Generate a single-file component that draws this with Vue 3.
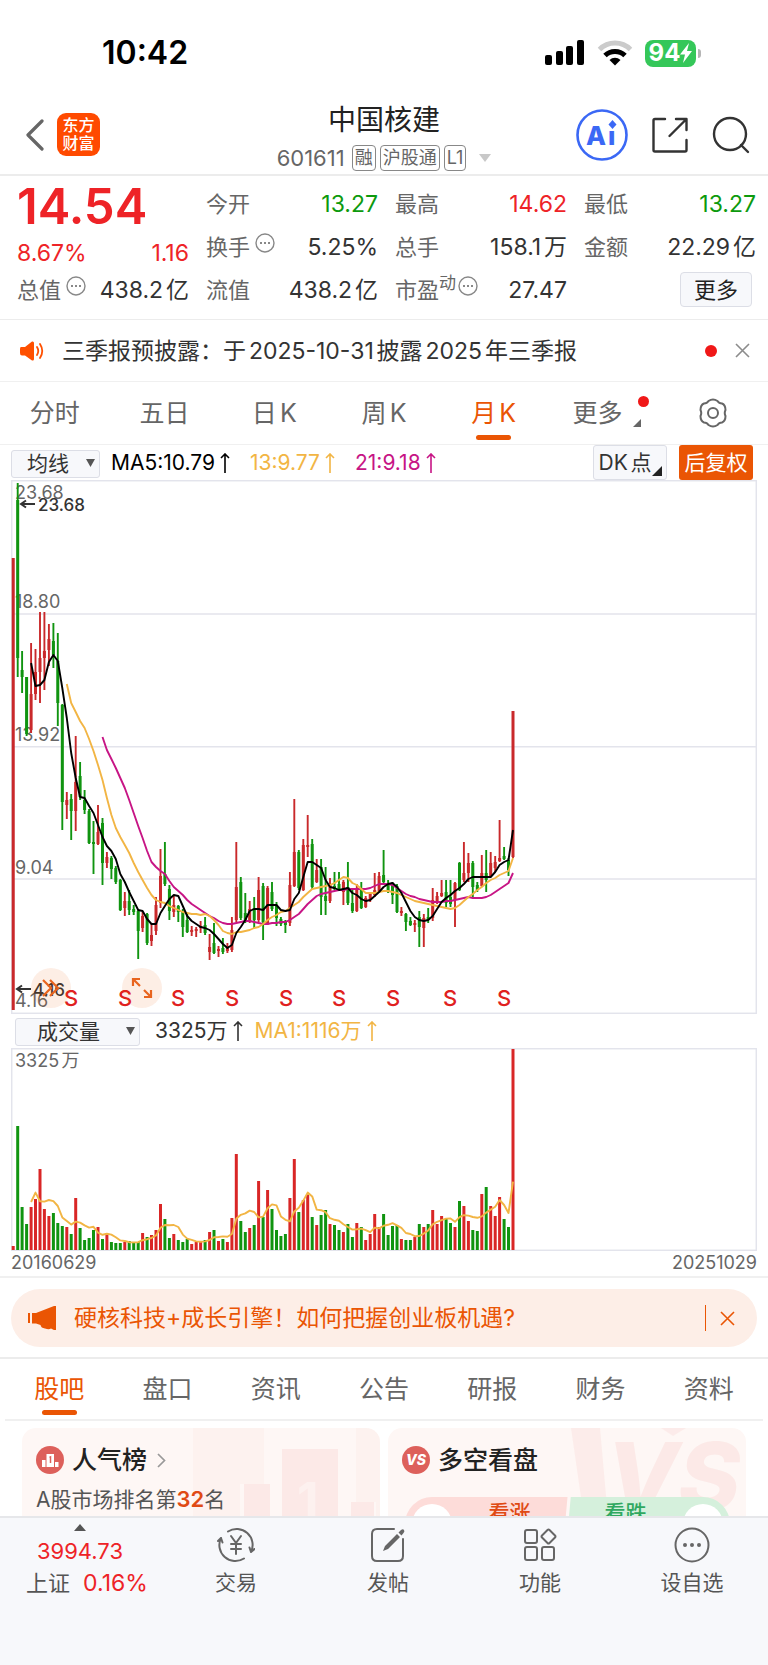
<template>
  <div class="page">
    <div class="status-bar">
      <span class="time">10:42</span>
      <div class="status-icons">
        <svg width="40" height="26" viewBox="0 0 40 26">
          <rect x="0" y="15" width="7" height="10" rx="2" />
          <rect x="11" y="11" width="7" height="14" rx="2" />
          <rect x="21" y="6" width="7" height="19" rx="2" />
          <rect x="32" y="0" width="7" height="25" rx="2" />
        </svg>
        <svg width="36" height="26" viewBox="0 0 36 26" fill="none" stroke-width="5">
          <path d="M2.5 9.5 A22 22 0 0 1 33.5 9.5" stroke="#cbcbcb" />
          <path d="M8 15.5 A14.5 14.5 0 0 1 28 15.5" stroke="#000" />
          <path d="M12.5 20 A8 8 0 0 1 23.500 20 L18 25.500 Z" fill="#000" />
        </svg>
        <div class="battery">
          <span class="battery-body">94<svg width="12" height="20" viewBox="0 0 12 20" fill="#fff"><path d="M9 0 L0 11.500 H5 L3 20 L12 8 H7 Z" /></svg></span>
          <span class="battery-cap"></span>
        </div>
      </div>
    </div>

    <header class="header">
      <div class="header-left">
        <button class="plain" aria-label="返回">
          <svg width="20" height="32" viewBox="0 0 20 32" fill="none" stroke="#666" stroke-width="3.200" stroke-linecap="round" stroke-linejoin="round"><path d="M17 2 L3 16 L17 30" /></svg>
        </button>
        <a href="#" class="logo">东方<br>财富</a>
      </div>
      <div class="header-title">
        <h1>中国核建</h1>
        <div class="code">
          <span class="code-num">601611</span>
          <i v-for="t in ['融', '沪股通', 'L1']" :key="t" class="tag">{{ t }}</i>
          <svg class="code-arrow" width="12" height="8" viewBox="0 0 12 8" fill="#c8c8c8"><path d="M0 0 H12 L6 8 Z" /></svg>
        </div>
      </div>
      <div class="header-right">
        <button class="plain" aria-label="AI">
          <svg width="52" height="52" viewBox="0 0 52 52">
            <circle cx="26" cy="26" r="24.500" fill="#fff" stroke="#3b68f5" stroke-width="2.600" />
            <text x="10 32" y="36" class="ai-text">Ai</text>
            <rect x="31" y="12" width="12" height="9" fill="#fff" />
            <path d="M36.500 11 L40.500 15.500 L36.500 20 L32.500 15.500 Z" fill="#3b68f5" />
          </svg>
        </button>
        <button class="plain" aria-label="分享">
          <svg width="36" height="36" viewBox="0 0 36 36" fill="none" stroke="#333" stroke-width="2.400" stroke-linecap="round" stroke-linejoin="round">
            <path d="M13 2 H3 Q1.500 2 1.500 3.500 V33 Q1.500 34.500 3 34.500 H33 Q34.500 34.500 34.500 33 V23" />
            <path d="M24 2 H34.500 V13 M34 2.500 L17.500 19" />
          </svg>
        </button>
        <button class="plain" aria-label="搜索">
          <svg width="38" height="38" viewBox="0 0 38 38" fill="none" stroke="#333" stroke-width="2.400" stroke-linecap="round"><circle cx="18" cy="18" r="16" /><path d="M29 29 L36 36" /></svg>
        </button>
      </div>
    </header>

    <section class="quote">
      <div class="quote-col first">
        <div class="price">14.54</div>
        <div class="quote-row red"><span class="value">8.67%</span><span class="value">1.16</span></div>
        <div class="quote-row">
          <span class="label">总值<MoreDot /></span><span class="value">438.2亿</span>
        </div>
      </div>
      <div v-for="(col, c) in quoteCols" :key="c" class="quote-col">
        <div v-for="q in col" :key="q.label" class="quote-row">
          <span class="label">{{ q.label }}<sup v-if="q.sup">{{ q.sup }}</sup><MoreDot v-if="q.dot" /></span>
          <span class="value" :class="q.color">{{ q.value }}</span>
        </div>
        <div v-if="c === 2" class="quote-row more-row"><button class="more-btn">更多</button></div>
      </div>
    </section>

    <section class="notice">
      <svg width="24" height="20" viewBox="0 0 24 20" fill="#ff5000">
        <path d="M1 6 H5 L12 0.500 Q14 0 14 2 V18 Q14 20 12 19.500 L5 14.500 H2 Q0 14.500 0 12 V8 Q0 6 1 6 Z" />
        <path d="M17 6 Q19.500 10 17 14 M20 3 Q24.500 10 20 17" fill="none" stroke="#ff5000" stroke-width="1.800" stroke-linecap="round" />
      </svg>
      <a href="#">三季报预披露：于2025-10-31披露2025年三季报</a>
      <span class="dot"></span>
      <button class="plain" aria-label="关闭">
        <svg width="15" height="15" viewBox="0 0 15 15" stroke="#8c8c8c" stroke-width="1.600"><path d="M1 1 L14 14 M14 1 L1 14" /></svg>
      </button>
    </section>

    <nav class="period">
      <button v-for="p in periods" :key="p" class="tab" :class="{ active: p === period }" @click="period = p">{{ p }}</button>
      <button class="tab more-tab">更多<span class="dot"></span><svg class="corner" width="8" height="8" viewBox="0 0 8 8" fill="#666"><path d="M8 0 V8 H0 Z" /></svg></button>
      <button class="tab" aria-label="设置">
        <svg width="30" height="30" viewBox="0 0 30 30" fill="none" stroke="#666" stroke-width="2" stroke-linejoin="round">
          <path d="M10.500 3 Q15 0 19.500 3 Q21 5.500 24 5.500 Q27.500 7 27.500 12 Q26 15 27.500 18 Q27.500 23 24 24.500 Q21 24.500 19.500 27 Q15 30 10.500 27 Q9 24.500 6 24.500 Q2.500 23 2.500 18 Q4 15 2.500 12 Q2.500 7 6 5.500 Q9 5.500 10.500 3 Z" />
          <circle cx="15" cy="15" r="5" />
        </svg>
      </button>
    </nav>

    <div class="toolbar">
      <div class="select-box ma">
        <select aria-label="主图指标"><option>均线</option></select>
        <svg width="9" height="8" viewBox="0 0 9 8" fill="#555"><path d="M0 0 H9 L4.500 8 Z" /></svg>
      </div>
      <span class="ind black">MA5:10.79<UpArrow /></span>
      <span class="ind orange">13:9.77<UpArrow /></span>
      <span class="ind purple">21:9.18<UpArrow /></span>
      <button class="dk">DK点<svg class="corner" width="10" height="10" viewBox="0 0 10 10" fill="#222"><path d="M10 0 V10 H0 Z" /></svg></button>
      <button class="fq">后复权</button>
    </div>

    <div class="chart">
      <svg viewBox="11 480 746 534">
        <g fill="none" stroke="#e3e4ec" stroke-width="1.500">
          <rect x="11.700" y="480.700" width="744.600" height="532.600" />
          <path d="M12 614 H756 M12 746.700 H756 M12 879 H756" />
        </g>
        <g class="axis">
          <text x="15" y="499">23.68</text>
          <text x="15" y="608">18.80</text>
          <text x="15" y="741">13.92</text>
          <text x="15" y="874">9.04</text>
          <text x="15" y="1007">4.16</text>
        </g>
        <g v-for="(d, i) in bars" :key="i" :stroke="d[0] ? '#c9292b' : '#109410'">
          <line :x1="xAt(i)" :x2="xAt(i)" :y1="d[1]" :y2="d[4]" stroke-width="1.900" />
          <line :x1="xAt(i)" :x2="xAt(i)" :y1="d[2]" :y2="d[3]" stroke-width="3" />
        </g>
        <g fill="none" stroke-width="1.900" stroke-linejoin="round">
          <polyline :points="line(ma21)" stroke="#c71585" />
          <polyline :points="line(ma13)" stroke="#f2b544" />
          <polyline :points="line(ma5)" stroke="#000" />
        </g>
        <g class="mark">
          <path d="M35 504 H21 M26 500.500 L21 504 L26 507.500" /><text x="38" y="511">23.68</text>
          <path d="M31 989 H17 M22 985.500 L17 989 L22 992.500" /><text x="33" y="996">4.16</text>
        </g>
        <g class="sell"><text v-for="x in sells" :key="x" :x="x" y="1006">S</text></g>
      </svg>
      <button class="round expand" aria-label="展开">
        <svg width="18" height="20" viewBox="0 0 18 20"><path d="M1 2 L9 10 L1 18 M8 2 L16 10 L8 18" /></svg>
      </button>
      <button class="round full" aria-label="全屏">
        <svg width="22" height="22" viewBox="0 0 22 22"><path d="M2 9 V2 H9 M2 2 L9 9 M13 20 H20 V13 M20 20 L13 13" /></svg>
      </button>
    </div>

    <div class="toolbar vol-bar">
      <div class="select-box vol">
        <select aria-label="副图指标"><option>成交量</option></select>
        <svg width="9" height="8" viewBox="0 0 9 8" fill="#555"><path d="M0 0 H9 L4.500 8 Z" /></svg>
      </div>
      <span class="ind">3325万<UpArrow /></span>
      <span class="ind orange">MA1:1116万<UpArrow /></span>
    </div>

    <div class="chart">
      <svg viewBox="11 1048 746 203">
        <rect x="11.700" y="1048.700" width="744.600" height="201.600" fill="none" stroke="#e3e4ec" stroke-width="1.500" />
        <text x="15" y="1067" class="axis">3325万</text>
        <line v-for="(d, i) in bars" :key="i" :x1="xAt(i)" :x2="xAt(i)" :y1="1250 - d[5]" y2="1250" :stroke="d[0] ? '#d92626' : '#109410'" stroke-width="3" />
        <polyline :points="line(volMa)" fill="none" stroke="#f2b544" stroke-width="1.900" stroke-linejoin="round" />
      </svg>
    </div>
    <div class="dates"><span>20160629</span><span>20251029</span></div>

    <section class="promo-wrap">
      <div class="promo">
        <svg width="28" height="24" viewBox="0 0 28 24" fill="#ea5504">
          <path d="M0 7 H2 V17 H0 Z M4 7 H8 L26 0 H28 V24 H26 L23 22.500 Q21 24 17 22.500 Q13 22 12.500 19 L8 17.500 H4 Z" />
        </svg>
        <a href="#">硬核科技+成长引擎！如何把握创业板机遇?</a>
        <span class="sep"></span>
        <button class="plain" aria-label="关闭">
          <svg width="15" height="15" viewBox="0 0 15 15" stroke="#ea5504" stroke-width="1.600"><path d="M1 1 L14 14 M14 1 L1 14" /></svg>
        </button>
      </div>
    </section>

    <nav class="sections">
      <button v-for="s in sections" :key="s" class="tab" :class="{ active: s === section }" @click="section = s">{{ s }}</button>
    </nav>

    <section class="cards">
      <article class="card">
        <svg class="watermark" width="190" height="90" viewBox="0 0 190 90" fill="#f9d5d1">
          <path d="M3 0 H74 V56 H50 V90 H3 Z" opacity=".15" />
          <path d="M166 0 H190 V90 H186 V74 H166 Z" opacity=".15" />
          <path d="M92 21 H148 V90 H92 Z M54 56 H80 V90 H54 Z M161 74 H184 V90 H161 Z" opacity=".4" />
          <text x="107" y="90" class="wm-one">1</text>
        </svg>
        <h2>
          <svg width="28" height="28" viewBox="0 0 28 28"><circle cx="14" cy="14" r="14" fill="#dd605b" /><path d="M6 14 H9.500 V21 H6 Z M10.500 8 H18 V21 H10.500 Z M19 16 H22.500 V21 H19 Z" fill="#fff" /><path d="M13.500 11.500 L14.500 11 V17" stroke="#dd605b" stroke-width="1.500" fill="none" /></svg>
          人气榜
          <svg class="chev" width="9" height="15" viewBox="0 0 9 15" fill="none" stroke="#999" stroke-width="1.700"><path d="M1 1 L7.500 7.500 L1 14" /></svg>
        </h2>
        <p>A股市场排名第<b>32</b>名</p>
      </article>
      <article class="card">
        <svg class="watermark" width="190" height="90" viewBox="0 0 190 90" fill="#f9d5d1">
          <path d="M15 0 H44 L52 90 H28 Z M105 0 H130 L117 8 Z" opacity=".3" />
          <text x="50" y="82" class="wm-vs">VS</text>
        </svg>
        <h2>
          <svg width="28" height="28" viewBox="0 0 28 28"><circle cx="14" cy="14" r="14" fill="#dd605b" /><text x="14" y="19" class="vs-text">VS</text></svg>
          多空看盘
        </h2>
        <div class="vote">
          <button class="bull"><span class="knob"></span>看涨</button>
          <button class="bear">看跌<span class="knob"></span></button>
        </div>
      </article>
    </section>

    <footer class="bottom">
      <a href="#" class="index">
        <svg width="12" height="7" viewBox="0 0 12 7" fill="#555"><path d="M6 0 L12 7 H0 Z" /></svg>
        <span class="red">3994.73</span>
        <span class="index-row">上证<em class="red">0.16%</em></span>
      </a>
      <a v-for="n in navs" :key="n.text" href="#" class="nav">
        <svg width="38" height="36" viewBox="0 0 38 36" fill="none" stroke="#666" stroke-width="2" stroke-linecap="round" stroke-linejoin="round"><path v-for="p in n.paths" :key="p" :d="p" /><path v-if="n.solid" :d="n.solid" fill="#666" stroke="none" /></svg>
        <span>{{ n.text }}</span>
      </a>
    </footer>
  </div>
</template>

<script setup>
import { ref, h } from 'vue'

// 圆圈省略号小图标
const MoreDot = () => h('svg', { width: 20, height: 20, viewBox: '0 0 20 20', class: 'more-dot', fill: 'none', stroke: '#888' }, [
  h('circle', { cx: 10, cy: 10, r: 9, 'stroke-width': 1.4 }),
  h('path', { d: 'M5 10 H7 M9 10 H11 M13 10 H15', 'stroke-width': 2 })
])

const UpArrow = () => h('svg', { width: 10, height: 20, viewBox: '0 0 10 20', class: 'up-arrow', fill: 'none', stroke: 'currentColor', 'stroke-width': 1.6 }, [
  h('path', { d: 'M5 20 V1 M1 5 L5 1 L9 5' })
])

const quoteCols = [
  [
    { label: '今开', value: '13.27', color: 'green' },
    { label: '换手', value: '5.25%', dot: true },
    { label: '流值', value: '438.2亿' }
  ],
  [
    { label: '最高', value: '14.62', color: 'red' },
    { label: '总手', value: '158.1万' },
    { label: '市盈', value: '27.47', sup: '动', dot: true }
  ],
  [
    { label: '最低', value: '13.27', color: 'green' },
    { label: '金额', value: '22.29亿' }
  ]
]

const periods = ['分时', '五日', '日K', '周K', '月K']
const period = ref('月K')
const sections = ['股吧', '盘口', '资讯', '公告', '研报', '财务', '资料']
const section = ref('股吧')

const navs = [
  {
    text: '交易',
    paths: ['M11 4.500 A16 16 0 0 1 34 25 M34 25 L32.500 20.500 M34 25 L37.500 22', 'M27 31.500 A16 16 0 0 1 4 11 M4 11 L1 14 M4 11 L5.500 15.500', 'M14 9 L19 16 L24 9 M19 16 V27 M14 17 H24 M14 22 H24']
  },
  {
    text: '发帖',
    paths: ['M25 2 H8 Q3 2 3 7 V29 Q3 34 8 34 H29 Q34 34 34 29 V12'],
    solid: 'M14 24 L16 19 L28 7 L31 10 L19 22 Z M29.500 5.500 L32 3 Q34 1.500 35 3 Q36 4.500 34.500 6 L32.500 8.500 Z'
  },
  {
    text: '功能',
    paths: [
      'M6 3 H14 Q16 3 16 5 V14 Q16 16 14 16 H6 Q4 16 4 14 V5 Q4 3 6 3 Z',
      'M6 20 H14 Q16 20 16 22 V31 Q16 33 14 33 H6 Q4 33 4 31 V22 Q4 20 6 20 Z',
      'M23 20 H31 Q33 20 33 22 V31 Q33 33 31 33 H23 Q21 33 21 31 V22 Q21 20 23 20 Z',
      'M26.500 3 Q27.500 2 28.500 3 L34 8.500 Q35 9.500 34 10.500 L28.500 16 Q27.500 17 26.500 16 L21 10.500 Q20 9.500 21 8.500 Z'
    ]
  },
  {
    text: '设自选',
    paths: ['M2.500 18 A16.500 16.500 0 1 1 35.500 18 A16.500 16.500 0 1 1 2.500 18'],
    solid: 'M10 18 a2 2 0 1 1 4 0 a2 2 0 1 1 -4 0 M17 18 a2 2 0 1 1 4 0 a2 2 0 1 1 -4 0 M24 18 a2 2 0 1 1 4 0 a2 2 0 1 1 -4 0'
  }
]

// [涨, 最高, 实体上, 实体下, 最低, 量]
const bars = [
  [1, 558, 558, 1010, 1010, 4], [0, 483, 500, 658, 677, 124], [0, 651, 670, 677, 693, 43], [0, 677, 677, 734, 736, 26],
  [1, 643, 694, 730, 733, 43], [1, 649, 672, 694, 700, 51], [1, 612, 658, 672, 703, 81], [1, 612, 651, 658, 690, 41],
  [1, 624, 639, 650, 666, 34], [0, 623, 641, 655, 668, 37], [0, 633, 661, 703, 726, 27], [0, 704, 705, 802, 830, 24],
  [1, 792, 800, 805, 819, 23], [0, 794, 799, 811, 840, 16], [1, 736, 782, 811, 831, 52], [0, 762, 776, 797, 800, 22],
  [0, 790, 800, 810, 814, 10], [0, 809, 811, 843, 844, 12], [0, 821, 842, 844, 874, 20], [1, 805, 832, 844, 845, 23],
  [0, 818, 823, 863, 885, 11], [1, 852, 857, 863, 868, 15], [0, 856, 858, 869, 879, 8], [0, 866, 868, 882, 884, 7],
  [0, 879, 880, 910, 911, 7], [1, 892, 901, 908, 916, 8], [0, 890, 901, 910, 915, 9], [0, 905, 909, 912, 915, 7],
  [0, 909, 911, 931, 959, 8], [1, 912, 916, 928, 932, 17], [0, 913, 914, 943, 945, 13], [1, 924, 935, 941, 946, 15],
  [1, 897, 905, 931, 935, 20], [1, 849, 876, 903, 908, 46], [0, 842, 874, 884, 886, 31], [0, 885, 889, 911, 920, 12],
  [1, 896, 905, 912, 917, 16], [0, 905, 906, 912, 922, 10], [0, 909, 911, 927, 937, 8], [0, 913, 920, 932, 933, 11],
  [1, 926, 930, 932, 936, 6], [1, 927, 929, 931, 937, 8], [1, 921, 926, 928, 933, 8], [0, 917, 925, 933, 935, 10],
  [1, 934, 947, 952, 960, 18], [0, 923, 943, 953, 954, 20], [1, 946, 949, 951, 957, 9], [0, 938, 948, 952, 954, 11],
  [1, 943, 946, 951, 953, 8], [1, 917, 930, 950, 952, 32], [1, 842, 887, 920, 922, 96], [0, 877, 882, 918, 920, 29],
  [0, 893, 913, 922, 923, 18], [1, 901, 909, 922, 923, 22], [0, 897, 908, 920, 928, 25], [1, 877, 890, 920, 922, 69],
  [0, 883, 886, 922, 940, 33], [1, 886, 888, 923, 925, 60], [0, 882, 892, 909, 911, 41], [0, 902, 905, 918, 926, 20],
  [0, 917, 919, 924, 926, 14], [0, 920, 921, 925, 933, 16], [1, 872, 885, 923, 926, 52], [1, 799, 852, 886, 887, 91],
  [0, 850, 852, 888, 890, 38], [1, 839, 845, 890, 891, 50], [1, 815, 845, 847, 857, 56], [0, 839, 844, 887, 889, 33],
  [1, 859, 870, 882, 883, 25], [0, 859, 867, 897, 915, 35], [0, 867, 896, 901, 915, 40], [1, 878, 885, 901, 903, 26],
  [0, 872, 886, 889, 890, 25], [0, 872, 884, 890, 891, 20], [1, 880, 882, 892, 905, 18], [0, 862, 887, 903, 905, 26],
  [0, 890, 903, 911, 913, 13], [1, 884, 888, 911, 912, 27], [0, 882, 889, 908, 909, 23], [1, 896, 898, 907, 908, 10],
  [1, 892, 894, 900, 902, 16], [1, 873, 890, 895, 897, 36], [1, 872, 876, 891, 893, 23], [0, 850, 875, 882, 883, 36],
  [0, 880, 883, 891, 893, 15], [0, 882, 885, 895, 904, 24], [0, 884, 886, 912, 913, 25], [1, 907, 911, 913, 916, 11],
  [0, 913, 914, 922, 931, 10], [0, 917, 921, 925, 926, 10], [1, 920, 923, 925, 932, 13], [0, 911, 917, 927, 947, 26],
  [1, 914, 918, 928, 947, 23], [0, 908, 917, 920, 923, 26], [1, 888, 900, 918, 921, 40], [1, 892, 896, 903, 904, 26],
  [1, 880, 893, 896, 897, 34], [0, 880, 892, 903, 907, 31], [0, 880, 897, 904, 907, 27], [1, 882, 883, 900, 927, 23],
  [0, 862, 863, 890, 891, 49], [1, 842, 873, 880, 882, 44], [1, 853, 863, 873, 882, 29], [0, 861, 863, 887, 897, 20],
  [0, 882, 885, 890, 892, 19], [1, 855, 873, 886, 887, 56], [0, 850, 873, 880, 892, 63], [1, 852, 863, 876, 877, 44],
  [1, 856, 862, 868, 872, 34], [1, 820, 858, 861, 862, 53], [0, 847, 856, 859, 860, 31], [0, 858, 860, 870, 876, 23],
  [1, 711, 711, 857, 858, 201]
]

const series = (start, ys) => ys.map((y, i) => [start + i, y])

const ma5 = series(4, [
  663, 686, 685, 680, 662, 655, 661, 688, 718, 753, 778, 797, 798, 806, 813, 825, 837, 846, 851, 859, 874, 882, 892, 901,
  910, 911, 919, 924, 924, 913, 906, 899, 895, 896, 906, 916, 921, 924, 927, 928, 930, 934, 939, 944, 948, 945, 933, 927,
  920, 911, 909, 909, 910, 905, 905, 905, 910, 911, 910, 899, 893, 877, 862, 862, 865, 868, 880, 887, 888, 890, 889, 888,
  893, 895, 899, 901, 900, 896, 892, 887, 884, 883, 887, 893, 902, 911, 917, 920, 921, 920, 916, 909, 902, 898, 895, 891,
  888, 884, 879, 877, 877, 877, 877, 877, 872, 865, 862, 860, 830
])
const ma13 = series(12, [
  684, 703, 712, 721, 728, 739, 751, 765, 780, 798, 815, 828, 837, 845, 853, 863, 872, 880, 888, 895, 900, 902, 903, 906,
  908, 910, 912, 913, 914, 914, 915, 914, 916, 920, 925, 931, 933, 934, 932, 932, 931, 930, 928, 927, 924, 920, 917, 915,
  912, 911, 908, 905, 902, 897, 893, 889, 888, 887, 886, 885, 883, 880, 877, 878, 883, 885, 889, 893, 893, 893, 892, 891,
  891, 892, 893, 895, 897, 899, 901, 902, 903, 904, 905, 906, 907, 908, 909, 908, 905, 901, 897, 894, 890, 887, 883,
  880, 878, 875, 873, 871, 858
])
const ma21 = series(20, [
  737, 750, 759, 768, 778, 788, 800, 813, 826, 838, 851, 862, 867, 871, 874, 881, 887, 891, 895, 900, 904, 907, 910, 913,
  916, 918, 921, 923, 924, 924, 923, 922, 921, 921, 922, 923, 924, 924, 923, 923, 922, 922, 920, 917, 914, 909, 904, 900,
  896, 894, 893, 892, 891, 890, 890, 889, 889, 889, 889, 889, 888, 886, 884, 884, 884, 885, 888, 891, 894, 896, 897, 899,
  900, 901, 902, 902, 902, 901, 901, 900, 899, 898, 897, 898, 898, 898, 897, 895, 892, 889, 886, 883, 873
])

const volMa = bars.slice(4).map((_, i) => [i + 4, 1250 - bars.slice(i, i + 5).reduce((s, d) => s + d[5], 0) / 5])

const sells = [71, 125, 178, 232, 286, 339, 393, 450, 504]

const xAt = i => (13.2 + i * 4.4625).toFixed(1)
const line = pts => pts.map(([i, y]) => `${xAt(i)},${y.toFixed(1)}`).join(' ')
</script>

<style>
body {
  margin: 0;
  background: #fff;
}
</style>

<style scoped>
.page {
  font-family: Inter, "Noto Sans CJK SC", sans-serif;
  font-size: 22px;
  line-height: 30px;
  color: #333;
  text-autospace: normal;
  overflow: hidden;
}

button {
  font: inherit;
  color: inherit;
  padding: 0;
  border: 0;
  background: none;
}

a {
  color: inherit;
  text-decoration: none;
}

svg {
  display: block;
  flex: none;
}

.red {
  color: #ee2327;
}

.green {
  color: #0d9a0d;
}

.status-bar {
  display: flex;
  justify-content: space-between;
  align-items: center;
  height: 40px;
  padding: 33px 67px 22px 102px;
}

.time {
  font-size: 32px;
  font-weight: 600;
  color: #000;
}

.status-icons,
.battery {
  display: flex;
  align-items: center;
}

.status-icons {
  gap: 12px;
}

.battery {
  gap: 2px;
}

.battery-body {
  display: flex;
  align-items: center;
  justify-content: center;
  width: 51px;
  height: 27px;
  border-radius: 8px;
  background: #35c759;
  color: #fff;
  font-size: 24px;
  font-weight: 700;
}

.battery-cap {
  width: 3px;
  height: 9px;
  border-radius: 0 4px 4px 0;
  background: #b5b5b5;
}

.header {
  display: grid;
  grid-template-columns: 1fr auto 1fr;
  align-items: center;
  height: 81px;
  padding: 0 18px;
  border-bottom: 2px solid #ececec;
  box-sizing: border-box;
}

.header-left,
.header-right {
  display: flex;
  align-items: center;
}

.header-left {
  gap: 12px;
  padding-left: 7px;
}

.header-right {
  justify-content: flex-end;
  gap: 24px;
}

.logo {
  width: 43px;
  height: 43px;
  border-radius: 9px;
  background: #ff4a00;
  color: #fff;
  font-size: 16px;
  font-weight: 500;
  line-height: 18px;
  text-align: center;
  padding-top: 3px;
  box-sizing: border-box;
}

.header-title {
  text-align: center;
}

h1 {
  margin: 0;
  font-size: 28px;
  font-weight: 400;
  line-height: 46px;
  color: #222;
}

.code {
  display: flex;
  align-items: center;
  gap: 4px;
  font-size: 22px;
  color: #666;
}

.code-num {
  margin-right: 3px;
}

.tag {
  border: 1px solid #888;
  border-radius: 4px;
  padding: 0 2px;
  font-size: 18px;
  line-height: 24px;
  font-style: normal;
}

.code-arrow {
  margin-left: 9px;
}

.ai-text {
  font-size: 26px;
  font-weight: 800;
  fill: #3b68f5;
}

.quote {
  display: grid;
  grid-template-columns: repeat(4, 1fr);
  gap: 17px;
  padding: 6px 12px 8px 17px;
  border-bottom: 1px solid #ececec;
}

.quote-row {
  display: flex;
  justify-content: space-between;
  align-items: center;
  height: 43px;
  white-space: nowrap;
}

.first .quote-row {
  height: 42px;
}

.first .quote-row:last-child {
  height: 32px;
}

.price {
  height: 50px;
  font-size: 49px;
  font-weight: 600;
  line-height: 50px;
  color: #ee2327;
}

.value {
  font-size: 23px;
}

.label {
  display: flex;
  color: #666;
}

.label sup {
  font-size: 17px;
  line-height: 16px;
}

.more-dot {
  margin: 1px 0 0 5px;
}

sup + .more-dot {
  margin-left: 2px;
}

.quote-row.more-row {
  justify-content: flex-end;
  padding-right: 4px;
}

.more-btn {
  width: 72px;
  height: 35px;
  border: 1px solid #dcdee6;
  border-radius: 4px;
  background: #f7f8fb;
  color: #222;
}

.notice {
  display: flex;
  align-items: center;
  height: 62px;
  padding: 0 18px 0 20px;
  border-bottom: 1px solid #f0f0f0;
  box-sizing: border-box;
}

.notice a {
  flex: 1;
  margin-left: 18px;
  font-size: 23px;
}

.dot {
  width: 12px;
  height: 12px;
  border-radius: 50%;
  background: #f01818;
}

.notice button {
  margin-left: 18px;
}

.period {
  display: grid;
  grid-template-columns: repeat(7, 1fr);
  height: 63px;
  border-bottom: 1px solid #f0f0f0;
  box-sizing: border-box;
}

.tab {
  position: relative;
  display: flex;
  align-items: center;
  justify-content: center;
  font-size: 25px;
  color: #666;
}

.tab.active {
  color: #ea5504;
}

.tab.active::after {
  content: '';
  position: absolute;
  bottom: 4px;
  width: 35px;
  height: 5px;
  border-radius: 3px;
  background: #ea5504;
}

.more-tab {
  padding-right: 12px;
}

.more-tab .dot {
  position: absolute;
  top: 14px;
  right: 9px;
  width: 11px;
  height: 11px;
}

.more-tab .corner {
  position: absolute;
  right: 17px;
  bottom: 17px;
}

.toolbar {
  display: flex;
  align-items: center;
  height: 35px;
  padding: 0 15px 0 11px;
  font-size: 21px;
}

.select-box {
  position: relative;
  height: 28px;
  margin-right: 11px;
}

.select-box select {
  appearance: none;
  width: 100%;
  height: 28px;
  padding: 0 0 0 15px;
  border: 1px solid #dcdee6;
  border-radius: 3px;
  background: #f7f8fb;
  font: inherit;
  line-height: 26px;
  color: #333;
}

.select-box svg {
  position: absolute;
  right: 5px;
  top: 10px;
}

.ma {
  width: 89px;
}

.vol {
  width: 125px;
  margin-right: 15px;
}

.vol select {
  padding-left: 21px;
}

.ind {
  display: flex;
  align-items: center;
  margin-right: 20px;
  text-autospace: no-autospace;
}

.vol-bar .ind {
  margin-right: 12px;
}

.up-arrow {
  margin-left: 5px;
}

.black {
  color: #000;
}

.orange {
  color: #f2b544;
}

.purple {
  color: #c71585;
}

.dk {
  position: relative;
  width: 74px;
  height: 35px;
  margin-left: auto;
  padding-right: 10px;
  border: 1px solid #dcdee6;
  border-radius: 3px;
  background: #f7f8fb;
  white-space: nowrap;
}

.dk .corner {
  position: absolute;
  right: 4px;
  bottom: 3px;
}

.fq {
  width: 74px;
  height: 35px;
  margin-left: 12px;
  border-radius: 3px;
  background: #ea5504;
  color: #fff;
}

.chart {
  position: relative;
  margin: 0 11px;
}

.chart > svg {
  width: 100%;
}

.axis {
  font-size: 18px;
  fill: #666;
}

.mark text {
  font-size: 17px;
  font-weight: 500;
  fill: #333;
}

.mark path {
  fill: none;
  stroke: #333;
  stroke-width: 2;
}

.sell {
  font-size: 22px;
  font-weight: 500;
  fill: #e02020;
  text-anchor: middle;
}

.round {
  position: absolute;
  bottom: 6px;
  display: flex;
  align-items: center;
  justify-content: center;
  width: 40px;
  height: 40px;
  border-radius: 50%;
  background: rgba(234, 85, 4, .1);
}

.round path {
  fill: none;
  stroke: #e8641e;
  stroke-width: 2.2;
}

.expand {
  left: 20px;
}

.full {
  left: 111px;
}

.vol-bar {
  height: 34px;
  padding-left: 15px;
}

.dates {
  display: flex;
  justify-content: space-between;
  height: 27px;
  padding: 0 11px;
  font-size: 18px;
  line-height: 24px;
  color: #666;
  border-bottom: 2px solid #f0f0f0;
  box-sizing: border-box;
}

.promo-wrap {
  padding: 11px 11px 10px;
  border-bottom: 2px solid #ececec;
}

.promo {
  display: flex;
  align-items: center;
  height: 58px;
  padding: 0 22px 0 17px;
  border-radius: 29px;
  background: #fdeee7;
  color: #ea5504;
}

.promo a {
  flex: 1;
  margin-left: 18px;
  font-size: 23px;
}

.sep {
  width: 1px;
  height: 26px;
  margin-right: 14px;
  background: #ea5504;
}

.sections {
  display: grid;
  grid-template-columns: repeat(7, 1fr);
  height: 62px;
  margin: 0 5px;
  border-bottom: 2px solid #f0f0f0;
  box-sizing: border-box;
}

.cards {
  display: grid;
  grid-template-columns: 1fr 1fr;
  gap: 8px;
  height: 95px;
  padding: 7px 22px 0;
  box-sizing: border-box;
  overflow: hidden;
}

.card {
  position: relative;
  height: 140px;
  padding: 14px;
  border-radius: 14px;
  background: #fef7f5;
  box-sizing: border-box;
  overflow: hidden;
}

.watermark {
  position: absolute;
  top: 0;
  right: 0;
}

.wm-one {
  font-size: 50px;
  font-weight: 700;
  fill: #fdf1ef;
}

.wm-vs {
  font-size: 94px;
  font-weight: 800;
  font-style: italic;
  opacity: .4;
}

h2 {
  position: relative;
  display: flex;
  align-items: center;
  gap: 8px;
  margin: 0;
  height: 36px;
  font-size: 25px;
  font-weight: 500;
  color: #222;
}

.chev {
  margin-left: 2px;
}

.card p {
  position: relative;
  margin: 4px 0 0;
  font-size: 21px;
  line-height: 34px;
  color: #555;
  text-autospace: no-autospace;
}

.card b {
  font-size: 22px;
  font-weight: 600;
  color: #e04a14;
}

.vs-text {
  font-size: 14px;
  font-weight: 800;
  font-style: italic;
  text-anchor: middle;
  fill: #fff;
}

.vote {
  position: relative;
  display: grid;
  grid-template-columns: 1fr 1fr;
  margin: 19px 2px 0 3px;
}

.vote button {
  display: flex;
  align-items: flex-start;
  justify-content: space-between;
  height: 54px;
  padding: 1px 7px;
  font-size: 21px;
  font-weight: 500;
  line-height: 30px;
}

.vote .bull {
  padding-right: 37px;
  border-radius: 27px 0 0 27px;
  background: #fddcd9;
  color: #e04a14;
  clip-path: polygon(0 0, 100% 0, 97% 100%, 0 100%);
}

.vote .bear {
  padding-left: 37px;
  border-radius: 0 27px 27px 0;
  background: #d5f0dc;
  color: #2fa860;
  clip-path: polygon(2% 0, 100% 0, 100% 100%, -1% 100%);
}

.knob {
  width: 40px;
  height: 40px;
  margin-top: 6px;
  border-radius: 50%;
  background: #fff;
}

.bottom {
  position: relative;
  display: grid;
  grid-template-columns: 160px repeat(4, 1fr);
  min-height: 149px;
  border-top: 2px solid #e6e7ea;
  background: #f7f8fb;
  box-sizing: border-box;
  color: #555;
}

.index,
.nav {
  display: flex;
  flex-direction: column;
  align-items: center;
}

.index {
  padding-top: 6px;
}

.index > .red {
  margin-top: 5px;
  line-height: 30px;
}

.index-row {
  display: flex;
  gap: 13px;
  margin-left: 14px;
  line-height: 34px;
}

em {
  font-size: 23px;
  font-style: normal;
}

.nav {
  padding-top: 9px;
  font-size: 21px;
}

.nav span {
  margin-top: 4px;
  line-height: 32px;
}
</style>
